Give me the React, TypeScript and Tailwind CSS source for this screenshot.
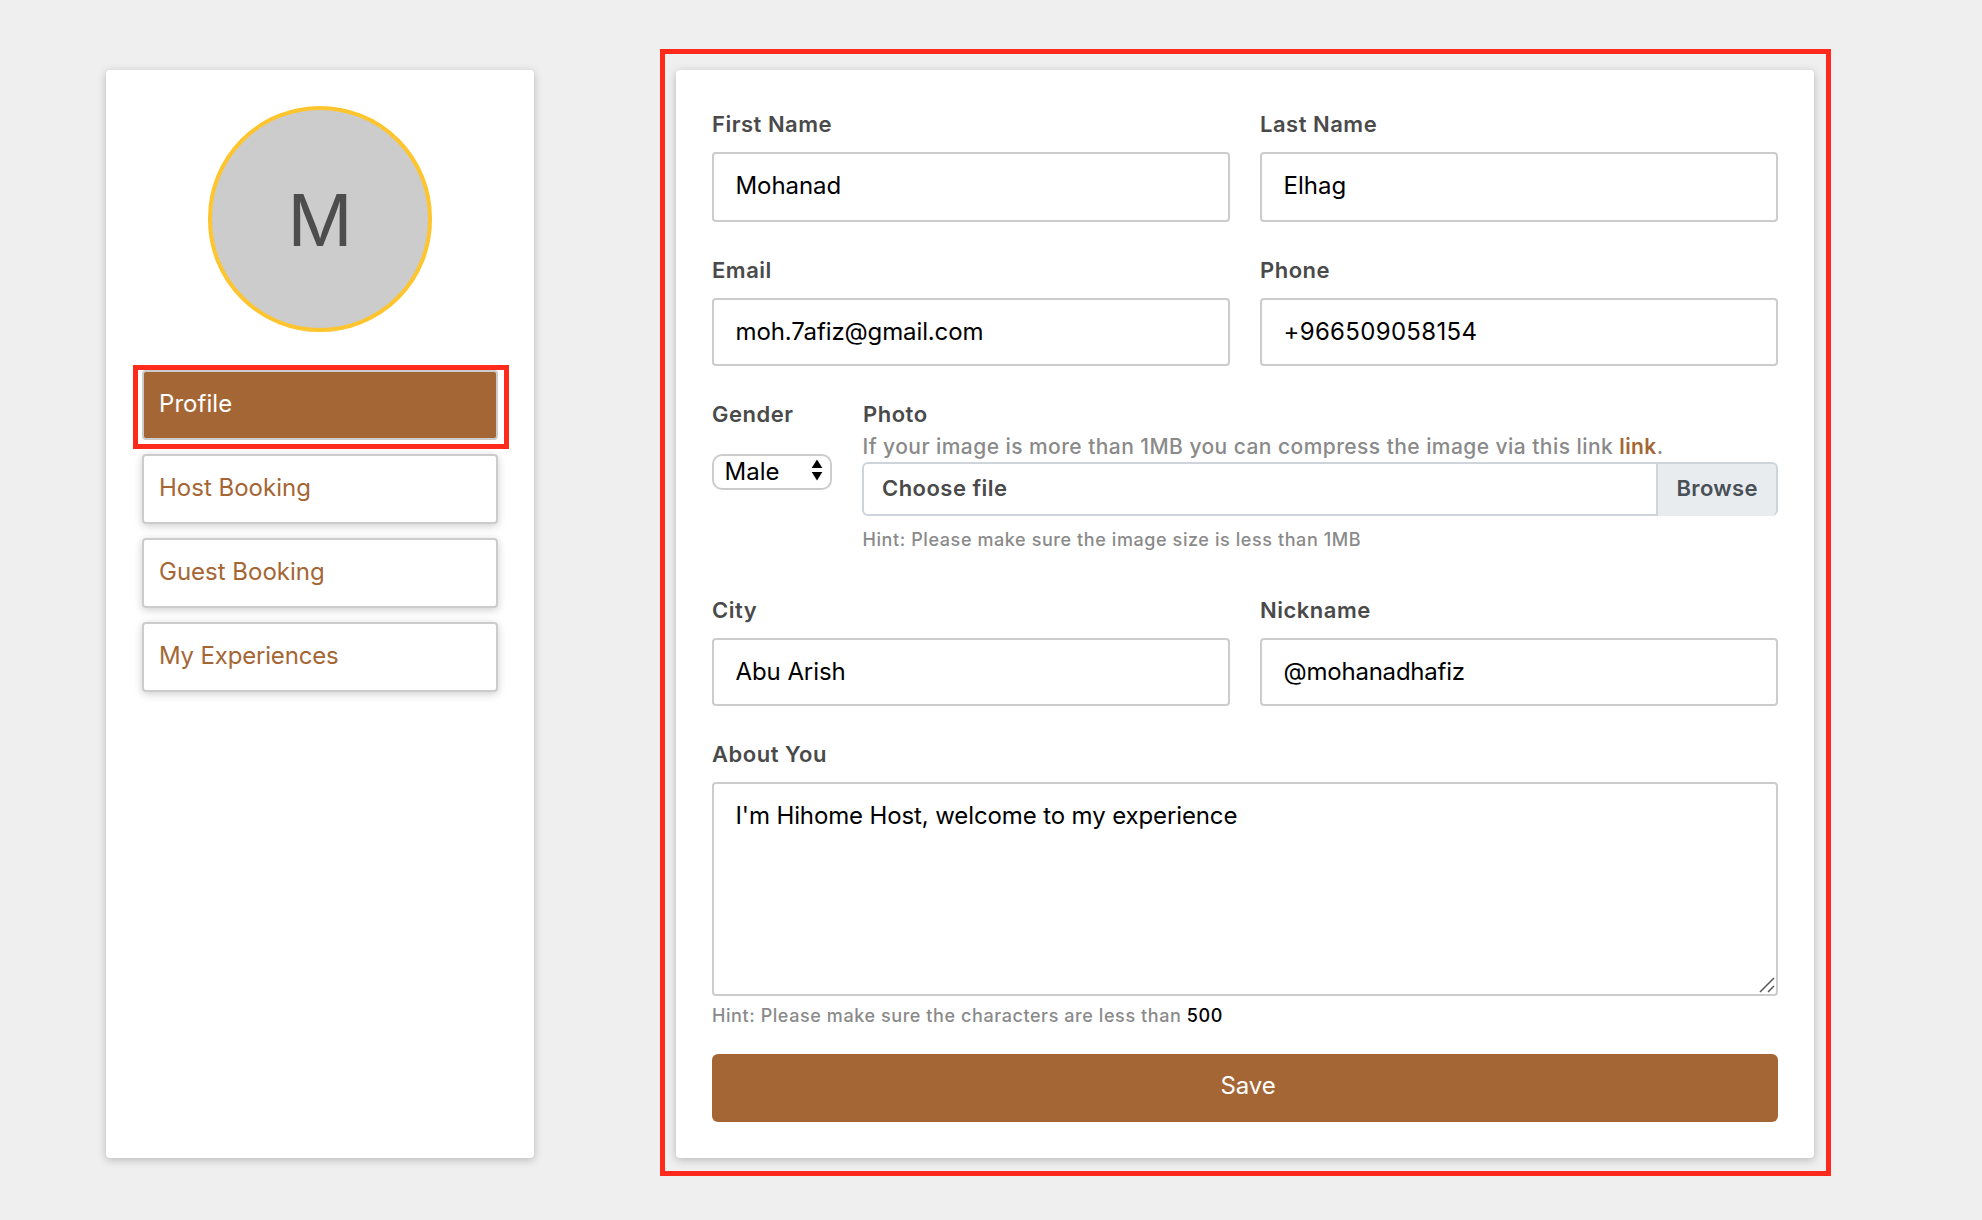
import type { ReactNode } from 'react';

const navItems = [
  { name: 'Host Booking', tracking: 'tracking-[0px]' },
  { name: 'Guest Booking', tracking: 'tracking-[0px]' },
  { name: 'My Experiences', tracking: 'tracking-[-0.18px]' },
];

function Label({ children }: { children: ReactNode }) {
  return <div className="h-9 text-[22px] leading-9 font-semibold tracking-[0.51px] text-[#4a4a4a]">{children}</div>;
}

function Field({ label, value, size, tracking = '' }: { label: string; value: string; size: string; tracking?: string }) {
  return (
    <label className="flex flex-1 flex-col gap-2.5">
      <Label>{label}</Label>
      <input
        readOnly
        value={value}
        className={`w-full rounded border-2 border-[#ccc] bg-white pr-[21px] pl-[21.5px] text-2xl text-black outline-none ${size} ${tracking}`}
      />
    </label>
  );
}

function Sidebar() {
  return (
    <aside className="flex w-[428px] flex-col rounded bg-white px-9 pt-9 shadow-[0_2px_8px_rgba(0,0,0,0.23)]">
      <div className="flex h-[226px] w-[224px] items-center justify-center self-center rounded-full border-4 border-[#ffc52e] bg-[#ccc] pt-px text-[72px] leading-none text-[#4d4d4d]">
        M
      </div>
      <nav className="mt-[38px] flex flex-col gap-3.5 text-2xl">
        <div className="relative">
          <a className="flex h-[70px] items-center rounded border-2 border-[#ccc] bg-[#a56635] pb-[3px] pl-[15px] tracking-[0.05px] text-white">
            Profile
          </a>
          <div className="pointer-events-none absolute -top-[5px] -right-[11px] -bottom-[9px] -left-[9px] border-5 border-[#ff2a1c]" />
        </div>
        {navItems.map((item) => (
          <a
            key={item.name}
            className={`flex h-[70px] items-center rounded border-2 border-[#ccc] bg-white pb-[3px] pl-[15px] text-[#a56635] shadow-[0_2px_8px_rgba(0,0,0,0.2)] ${item.tracking}`}
          >
            {item.name}
          </a>
        ))}
      </nav>
    </aside>
  );
}

function GenderSelect() {
  return (
    <div className="w-[120px]">
      <Label>Gender</Label>
      <div className="mt-[22px] flex h-9 items-center justify-between rounded-[10px] border-2 border-[#ccc] bg-white pr-[7px] pl-[10.5px] text-2xl leading-none text-black">
        Male
        <svg width="12" height="22" viewBox="0 0 12 22" className="-mt-1" aria-hidden="true">
          <path d="M6 0.5 11.3 9H0.7Z" fill="#000" />
          <path d="M6 21.5 11.3 13H0.7Z" fill="#000" />
        </svg>
      </div>
    </div>
  );
}

function PhotoUpload() {
  return (
    <div className="flex flex-1 flex-col">
      <div className="pl-px">
        <Label>Photo</Label>
      </div>
      <p className="h-[30px] pl-[0.5px] text-[21px] leading-[30px] font-medium tracking-[0.44px] text-[#8a8a8a]">
        If your image is more than 1MB you can compress the image via this link{' '}
        <a className="font-semibold text-[#a56635]">link</a>.
      </p>
      <div className="flex h-[54px] text-[22px] font-semibold">
        <div className="flex flex-1 items-center rounded-l-md border-2 border-r-0 border-[#ced4da] bg-white pb-0.5 pl-[18px] tracking-[0.47px] text-[#4a4a4a]">
          Choose file
        </div>
        <div className="flex w-[122px] items-center rounded-r-md border-2 border-b-0 border-[#ced4da] bg-[#e9ecef] pb-1 pl-[18.5px] tracking-[0.33px] text-[#495057]">
          Browse
        </div>
      </div>
      <p className="mt-2.5 pl-[0.5px] text-lg leading-7 font-medium tracking-[0.59px] text-[#8a8a8a]">
        Hint: Please make sure the image size is less than 1MB
      </p>
    </div>
  );
}

function ProfileForm() {
  return (
    <main className="relative ml-[142px] flex w-[1138px] flex-col rounded bg-white px-9 pt-9 shadow-[0_2px_8px_rgba(0,0,0,0.23)]">
      <div className="flex gap-[30px]">
        <Field label="First Name" value="Mohanad" size="h-[70px] pb-[3px]" tracking="tracking-[-0.08px]" />
        <Field label="Last Name" value="Elhag" size="h-[70px] pb-[3px]" />
      </div>
      <div className="mt-[30px] flex gap-[30px]">
        <Field label="Email" value="moh.7afiz@gmail.com" size="h-[68px] pb-px" tracking="tracking-[-0.12px]" />
        <Field label="Phone" value="+966509058154" size="h-[68px] pb-px" tracking="tracking-[0.32px]" />
      </div>
      <div className="mt-[30px] flex h-[196px] gap-[30px]">
        <GenderSelect />
        <PhotoUpload />
      </div>
      <div className="flex gap-[30px]">
        <Field label="City" value="Abu Arish" size="h-[68px] pb-px" tracking="tracking-[-0.08px]" />
        <Field label="Nickname" value="@mohanadhafiz" size="h-[68px] pb-px" tracking="tracking-[-0.22px]" />
      </div>
      <div className="mt-[30px] flex flex-col">
        <Label>About You</Label>
        <div className="relative mt-2.5 h-[214px] rounded border-2 border-[#ccc] bg-white px-[21.5px] pt-4 text-2xl leading-8 tracking-[-0.12px] text-black">
          I'm Hihome Host, welcome to my experience
          <svg width="16" height="16" viewBox="0 0 16 16" className="absolute right-px bottom-px" aria-hidden="true">
            <path d="M1 15 15 1M9 15 15 9" stroke="#555" strokeWidth="1.5" fill="none" />
          </svg>
        </div>
        <p className="mt-1.5 text-lg leading-7 font-medium tracking-[0.58px] text-[#8a8a8a]">
          Hint: Please make sure the characters are less than <span className="text-black">500</span>
        </p>
        <button className="mt-6 h-[68px] rounded-md bg-[#a56635] pb-1 pl-1.5 text-2xl tracking-[-0.1px] text-white">Save</button>
      </div>
      <div className="pointer-events-none absolute -top-[21px] -right-[17px] -bottom-[18px] -left-4 border-5 border-[#ff2a1c]" />
    </main>
  );
}

export default function App() {
  return (
    <div className="flex h-[1220px] w-[1982px] bg-[#efefef] pt-[70px] pb-[62px] pl-[106px] font-['Inter',sans-serif]">
      <Sidebar />
      <ProfileForm />
    </div>
  );
}
